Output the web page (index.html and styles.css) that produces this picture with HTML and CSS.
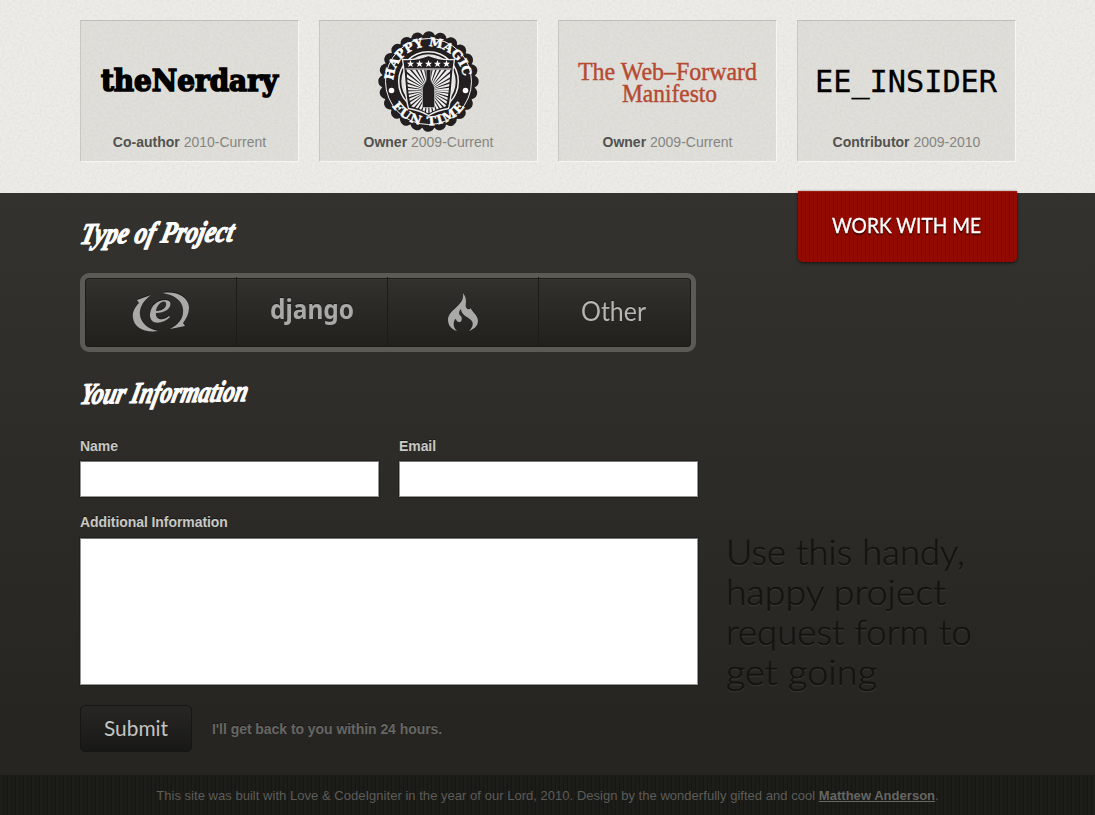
FILE: index.html
```html
<!DOCTYPE html>
<html lang="en">
<head>
<meta charset="utf-8">
<title>Work With Me</title>
<link rel="stylesheet" href="styles.css">
</head>
<body>
<section class="clients">
  <div class="card">
    <svg class="logo" width="217" height="112" viewBox="0 0 217 112">
      <text class="nerdary" x="20" y="70" textLength="177" lengthAdjust="spacingAndGlyphs">theNerdary</text>
    </svg>
    <p class="role"><strong>Co-author</strong> 2010-Current</p>
  </div>
  <div class="card">
    <svg class="logo" width="217" height="112" viewBox="-108.5 -60.5 217 112">
      <defs>
        <path id="arcTop" d="M-34.6 6A35.1 35.1 0 1 1 34.6 6"/>
        <path id="arcBottom" d="M-42.5 12A44.2 44.2 0 0 0 42.5 12"/>
        <clipPath id="shieldClip"><path d="M-22-12H22C21 2 20 18 17 25Q8 27 0 32Q-8 27-17 25C-20 18-21 2-22-12Z"/></clipPath>
      </defs>
      <circle r="46.5" fill="#231f20"/>
      <circle class="scallop" r="44"/>
      <circle r="43" fill="none" stroke="#f2f2ef" stroke-width="1"/>
      <circle r="29.8" fill="#231f20" stroke="#f2f2ef" stroke-width="1.5"/>
      <circle r="27.2" fill="#e4e4e1"/>
      <path d="M-26-22Q-12-21 0-26Q12-21 26-22C23-6 24 14 20 27Q8 29 0 34Q-8 29-20 27C-24 14-23-6-26-22Z" fill="#231f20" stroke="#eee" stroke-width="1.3"/>
      <g clip-path="url(#shieldClip)"><circle class="rays" cy="9" r="23"/></g>
      <path d="M-23-12.500H23" stroke="#eee" stroke-width="1"/>
      <g fill="#fff">
        <path id="star" d="M0-21.500L1-18.800H3.500L1.500-17L2.300-14.500L0-16L-2.300-14.500L-1.500-17L-3.500-18.800H-1Z"/>
        <use href="#star" x="-9"/><use href="#star" x="9"/><use href="#star" x="-18"/><use href="#star" x="18"/>
      </g>
      <path d="M-2.300-12H2.300V-2C2.300 1 6 3 6 7V26H-6V7C-6 3-2.300 1-2.300-2Z" fill="#231f20" stroke="#ddd" stroke-width=".5"/>
      <circle cx="-37" cy="9" r="2.8" fill="#fff"/><circle cx="37" cy="9" r="2.8" fill="#fff"/>
      <text class="badge-text"><textPath href="#arcTop" startOffset="7" textLength="104">HAPPY MAGIC</textPath></text>
      <text class="badge-text"><textPath href="#arcBottom" startOffset="14" textLength="85">FUN TIME</textPath></text>
    </svg>
    <p class="role"><strong>Owner</strong> 2009-Current</p>
  </div>
  <div class="card">
    <svg class="logo" width="217" height="112" viewBox="0 0 217 112">
      <text class="manifesto" x="19" y="59" textLength="179" lengthAdjust="spacingAndGlyphs">The Web–Forward</text>
      <text class="manifesto" x="63" y="81" textLength="95" lengthAdjust="spacingAndGlyphs">Manifesto</text>
    </svg>
    <p class="role"><strong>Owner</strong> 2009-Current</p>
  </div>
  <div class="card">
    <svg class="logo" width="217" height="112" viewBox="0 0 217 112">
      <text class="insider" x="17" y="71" textLength="182" lengthAdjust="spacingAndGlyphs">EE_INSIDER</text>
    </svg>
    <p class="role"><strong>Contributor</strong> 2009-2010</p>
  </div>
</section>

<main class="work">
  <form class="form">
    <h2 class="heading"><svg width="180" height="44" viewBox="0 0 180 44">
      <text class="script" transform="translate(-1 29) rotate(-1) skewX(-14)" textLength="153" lengthAdjust="spacingAndGlyphs">Type of Project</text>
    </svg></h2>
    <div class="types">
      <div class="type">
        <svg width="60" height="44" viewBox="0 0 60 44" fill="#a9a9a7">
          <path d="M6 9L20 4C12 10 8 17 9 24C10 32 17 38 27 40C13 42 3 36 2 27C1 21 4 16 8 12Z"/>
          <path d="M32 2C46 0 57 6 58 16C58 23 55 28 52 32L54 35L39 38C48 33 53 27 52 18C51 9 43 4 32 2Z"/>
          <path fill-rule="evenodd" d="M19 23C20 14 27 9 34 9C41 9 41 15 36 19C33 21 29 22 25 22C24 28 31 31 38 25L39 26C31 34 18 34 19 23ZM25 20C32 20 36 16 35 12C33 8 26 13 25 20Z"/>
        </svg>
      </div>
      <div class="type">
        <svg width="90" height="44" viewBox="0 0 90 44">
          <text class="django" x="3" y="28" textLength="84" lengthAdjust="spacingAndGlyphs">django</text>
        </svg>
      </div>
      <div class="type">
        <svg width="32" height="42" viewBox="0 0 32 42" fill="#a9a9a7">
          <path d="M16 1C21 7 18 12 19 15C20 18 24 18 24 15C23 19 31 22 31 29C31 34 27 37 22 39C26 35 27 31 24 28C21 25 14 23 14 17C12 19 11 22 14 24C16 27 14 31 12 30C9 30 10 27 8 27C6 31 6 35 10 39C4 37 1 33 1 28C1 17 18 14 16 1Z"/>
        </svg>
      </div>
      <div class="type">
        <svg width="70" height="44" viewBox="0 0 70 44">
          <text class="other" x="1" y="30" textLength="65" lengthAdjust="spacingAndGlyphs">Other</text>
        </svg>
      </div>
    </div>
    <h2 class="heading info"><svg width="190" height="44" viewBox="0 0 190 44">
      <text class="script" transform="translate(-1 29) rotate(-1) skewX(-14)" textLength="167" lengthAdjust="spacingAndGlyphs">Your Information</text>
    </svg></h2>
    <div class="fields">
      <label class="field">Name<input class="input" type="text"></label>
      <label class="field">Email<input class="input" type="text"></label>
    </div>
    <label class="field extra">Additional Information<textarea class="input area"></textarea></label>
    <div class="actions">
      <button class="submit" type="button"><svg width="70" height="30" viewBox="0 0 70 30">
        <text class="submit-text" x="3" y="22" textLength="64" lengthAdjust="spacingAndGlyphs">Submit</text>
      </svg></button>
      <span class="note">I'll get back to you within 24 hours.</span>
    </div>
  </form>
  <aside class="side">
    <div class="ribbon"><svg width="160" height="30" viewBox="0 0 160 30">
      <text class="ribbon-text" x="5" y="21" textLength="149" lengthAdjust="spacingAndGlyphs">WORK WITH ME</text>
    </svg></div>
    <svg class="pitch" width="270" height="170" viewBox="0 0 270 170">
      <text x="0" y="34" textLength="239" lengthAdjust="spacingAndGlyphs">Use this handy,</text>
      <text x="0" y="74" textLength="220" lengthAdjust="spacingAndGlyphs">happy project</text>
      <text x="0" y="114" textLength="246" lengthAdjust="spacingAndGlyphs">request form to</text>
      <text x="0" y="154" textLength="151" lengthAdjust="spacingAndGlyphs">get going</text>
    </svg>
  </aside>
</main>
<footer class="footer">This site was built with Love &amp; CodeIgniter in the year of our Lord, 2010. Design by the wonderfully gifted and cool&nbsp;<a class="link" href="#">Matthew Anderson</a>.</footer>
</body>
</html>
```
FILE: styles.css
```css
* { box-sizing: border-box; }
body {
  margin: 0;
  height: 815px;
  overflow: hidden;
  background: #252420;
  font-family: "Liberation Sans", Arial, sans-serif;
  font-size: 14px;
}
svg { display: block; overflow: visible; }

.clients {
  height: 193px;
  padding: 20px 79px 0 80px;
  display: grid;
  grid-template-columns: repeat(4, 219px);
  gap: 20px;
  align-items: start;
  background-color: #edece8;
  background-image: url("data:image/svg+xml,%3Csvg xmlns='http://www.w3.org/2000/svg' width='200' height='200'%3E%3Cfilter id='n'%3E%3CfeTurbulence type='fractalNoise' baseFrequency='.4' numOctaves='2' stitchTiles='stitch'/%3E%3CfeColorMatrix values='0 0 0 0 .4 0 0 0 0 .4 0 0 0 0 .35 .24 0 0 0 -.08'/%3E%3C/filter%3E%3Crect width='200' height='200' filter='url(%23n)'/%3E%3C/svg%3E");
}
.card {
  height: 142px;
  border: 1px solid #f6f6f3;
  border-top-color: #c0c0ba;
  border-left-color: #c8c8c2;
  background: rgba(100, 100, 88, .09);
}
.role {
  margin: 0;
  height: 20px;
  line-height: 19px;
  text-align: center;
  color: #858581;
}
.role strong { color: #52524f; }
.nerdary { font: bold 29px "DejaVu Serif", serif; stroke: #000; stroke-width: 1.6; }
.manifesto { font: 25px "Liberation Serif", serif; fill: #b54a31; stroke: #b54a31; stroke-width: .4; }
.insider { font: 30.500px "DejaVu Sans Mono", monospace; stroke: #000; stroke-width: .3; }
.scallop { fill: none; stroke: #231f20; stroke-width: 12.5; stroke-linecap: round; stroke-dasharray: .1 11.419; }
.rays { fill: none; stroke: #eee; stroke-width: 46; stroke-dasharray: 2.6 1.41; }
.badge-text { font: bold 12.500px "DejaVu Serif", serif; fill: #fff; stroke: #fff; stroke-width: .4; }

.work {
  height: 582px;
  padding-left: 80px;
  display: flex;
  background: linear-gradient(#33322e, #252420);
}
.form { width: 618px; }
.heading { margin: 0; height: 80px; padding-top: 22px; }
.heading.info { padding-top: 23px; }
.script { font: italic bold 30px "Liberation Serif", serif; fill: #fff; stroke: #fff; stroke-width: 1.2; stroke-linejoin: round; }
.types {
  width: 616px;
  height: 79px;
  border: 5px solid #5b5a55;
  border-radius: 9px;
  display: grid;
  grid-template-columns: 151px 151px 151px 1fr;
  background: linear-gradient(#32312d, #21201d);
  box-shadow: inset 0 0 0 1px #1c1b18, inset 0 2px #383732;
}
.type { display: flex; align-items: center; justify-content: center; filter: drop-shadow(0 -1px 0 #191917); }
.type + .type { border-left: 1px solid #1d1c19; }
.django { font: bold 26px "Noto Sans", sans-serif; fill: #a9a9a7; }
.other { font: 26px Lato, sans-serif; fill: #b5b5b2; }
.fields { display: flex; gap: 20px; }
.field {
  display: block;
  width: 299px;
  line-height: 16px;
  font-weight: bold;
  font-size: 14px;
  letter-spacing: -.07px;
  color: #c8c8c5;
  text-shadow: 0 -1px #171714;
  padding-top: 6px;
}
.input {
  display: block;
  width: 100%;
  height: 36px;
  margin-top: 7px;
  padding: 0;
  border: 1px solid #969692;
  border-top-color: #777;
  background: #fff;
  border-radius: 0;
  box-shadow: 0 0 0 1px #20201c;
  resize: none;
}
.field.extra { width: 618px; padding-top: 17px; }
.input.area { height: 147px; margin-top: 8px; }
.actions { display: flex; align-items: center; margin-top: 20px; gap: 20px; }
.submit {
  width: 112px;
  height: 47px;
  padding: 0;
  border: 1px solid #171614;
  border-radius: 5px;
  background: linear-gradient(#272623, #181816);
  display: flex;
  align-items: center;
  justify-content: center;
}
.submit-text { font: 21px Lato, sans-serif; fill: #c4c4c1; }
.note { font-weight: bold; letter-spacing: -.05px; color: #676764; text-shadow: 0 -1px #171714; }
.side { width: 318px; padding-left: 28px; }
.ribbon {
  width: 219px;
  height: 71px;
  margin: -2px 0 0 71.500px;
  display: flex;
  align-items: center;
  justify-content: center;
  border-radius: 0 0 5px 5px;
  background: repeating-linear-gradient(90deg, #930b00 0 3px, #830900 3px 4px);
  box-shadow: 0 1px 3px #111, inset 0 1px #a21b12;
}
.ribbon-text { font: 21px Lato, sans-serif; fill: #fff; stroke: #fff; stroke-width: .3; filter: drop-shadow(0 2px 0 #4a0500); }
.pitch { margin-top: 269px; font: 300 36px Lato, sans-serif; fill: #141411; stroke: #141411; stroke-width: .6; filter: drop-shadow(0 1px 0 #3b3a36); }
.footer {
  height: 40px;
  display: flex;
  align-items: center;
  justify-content: center;
  font-size: 13px;
  letter-spacing: .03px;
  color: #5c5c58;
  background: repeating-linear-gradient(90deg, #1c1c18 0 3px, #161613 3px 4px);
}
.link { color: #666662; font-weight: bold; }
```
